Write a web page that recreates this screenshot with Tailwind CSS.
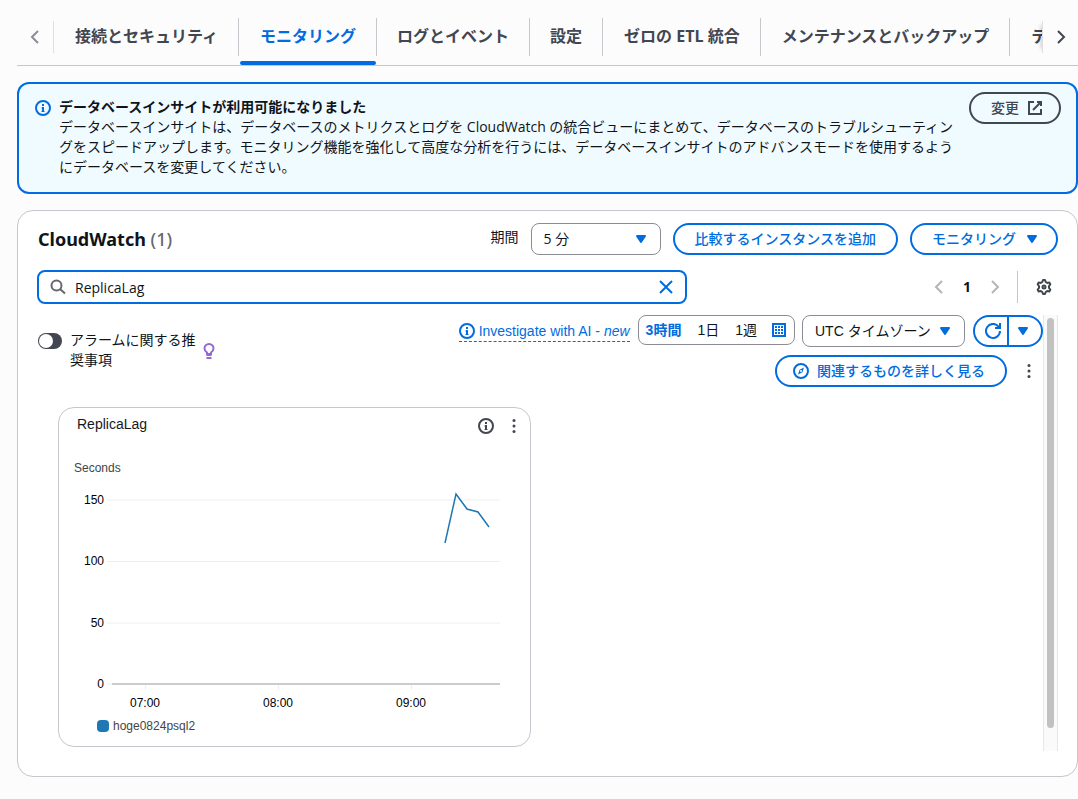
<!DOCTYPE html>
<html lang="ja">
<head>
    <meta charset="UTF-8">
    <meta name="viewport" content="width=device-width, initial-scale=1.0">
    <title>RDS - モニタリング</title>
    <script src="https://cdn.jsdelivr.net/npm/@tailwindcss/browser@4"></script>
</head>
<body class="min-h-screen bg-[#fcfcfd] pl-[17px] font-['Open_Sans','Noto_Sans_CJK_JP',sans-serif] text-sm leading-5 text-[#0f141a]">

    <!-- Tabs -->
    <nav class="flex h-[66px] items-stretch border-b border-[#c6c6cd] pt-[9px]" aria-label="タブ">
        <button class="my-3 flex w-[37px] shrink-0 items-center justify-center border-r border-[#dedee3] text-[#8c8c94]" aria-label="前へ">
            <svg class="size-4" viewBox="0 0 16 16" fill="none" stroke="currentColor" stroke-width="2"><path d="M11 2 5 8l6 6"/></svg>
        </button>
        <div class="flex min-w-0 flex-1 overflow-hidden text-base font-bold whitespace-nowrap text-[#424650]" role="tablist">
            <button class="flex shrink-0 flex-col pt-[9px]" role="tab"><span class="flex h-[38px] items-center border-r border-[#c6c6cd] pr-5 pb-[3px] pl-[21px]">接続とセキュリティ</span></button>
            <button class="flex shrink-0 flex-col justify-between pt-[9px] text-[#006ce0]" role="tab" aria-selected="true">
                <span class="flex h-[38px] items-center border-r border-[#c6c6cd] pr-5 pb-[3px] pl-[21px]">モニタリング</span>
                <span class="mx-px h-1 self-stretch rounded-full bg-[#006ce0]"></span>
            </button>
            <button class="flex shrink-0 flex-col pt-[9px]" role="tab"><span class="flex h-[38px] items-center border-r border-[#c6c6cd] px-5 pb-[3px]">ログとイベント</span></button>
            <button class="flex shrink-0 flex-col pt-[9px]" role="tab"><span class="flex h-[38px] items-center border-r border-[#c6c6cd] px-5 pb-[3px]">設定</span></button>
            <button class="flex shrink-0 flex-col pt-[9px]" role="tab"><span class="flex h-[38px] items-center border-r border-[#c6c6cd] pr-5 pb-[3px] pl-[21px]">ゼロの ETL 統合</span></button>
            <button class="flex shrink-0 flex-col pt-[9px]" role="tab"><span class="flex h-[38px] items-center border-r border-[#c6c6cd] pr-5 pb-[3px] pl-[21px]">メンテナンスとバックアップ</span></button>
            <button class="flex shrink-0 flex-col pt-[9px]" role="tab"><span class="flex h-[38px] items-center pr-5 pb-[3px] pl-[21px]">データ移行</span></button>
        </div>
        <button class="z-10 my-3 flex w-9 shrink-0 items-center justify-center border-l border-[#dedee3] bg-[#fcfcfd] text-[#424650] shadow-[-5px_0_4px_-4px_rgba(0,7,22,0.2)]" aria-label="次へ">
            <svg class="size-4" viewBox="0 0 16 16" fill="none" stroke="currentColor" stroke-width="2"><path d="m5 2 6 6-6 6"/></svg>
        </button>
    </nav>

    <!-- Info alert -->
    <section class="mt-4 flex items-start rounded-xl border-2 border-[#006ce0] bg-[#f0fbff] py-2 pr-[15px] pl-4">
        <svg class="mt-2 size-4 shrink-0 text-[#006ce0]" viewBox="0 0 16 16" fill="none" stroke="currentColor" stroke-width="2"><circle cx="8" cy="8" r="7"/><path d="M8 12V7M8 6V4"/><path d="M6.5 8H8M6.5 11.5h3" stroke-width="1"/></svg>
        <div class="ml-2 min-w-0 flex-1 pt-[5px] pb-[7px]">
            <h2 class="font-bold">データベースインサイトが利用可能になりました</h2>
            <p>データベースインサイトは、データベースのメトリクスとログを CloudWatch の統合ビューにまとめて、データベースのトラブルシューティングをスピードアップします。モニタリング機能を強化して高度な分析を行うには、データベースインサイトのアドバンスモードを使用するようにデータベースを変更してください。</p>
        </div>
        <button class="ml-3 flex h-8 shrink-0 items-center gap-2 rounded-full border-2 border-[#424650] pr-4 pl-5 font-medium text-[#424650]">
            変更
            <svg class="size-4" viewBox="0 0 16 16" fill="none" stroke="currentColor" stroke-width="2"><path d="M10 2h4v4M6 10l8-8"/><path d="M14 9v5H2V2h5"/></svg>
        </button>
    </section>

    <!-- CloudWatch panel -->
    <main class="mt-4 rounded-2xl border border-[#c6c6cd] bg-white pt-3 pr-[19px] pb-[25px] pl-5">
        <div class="flex h-8 items-center">
            <h1 class="flex-1 font-['Noto_Sans','Noto_Sans_CJK_JP',sans-serif] text-lg font-bold">CloudWatch <span class="font-medium text-[#656871]">(1)</span></h1>
            <label for="period" class="mr-3 pb-1">期間</label>
            <div class="relative mr-3">
                <select id="period" class="h-8 w-[130px] appearance-none rounded-lg border border-[#8c8c94] bg-white px-3">
                    <option>5 分</option>
                </select>
                <svg class="pointer-events-none absolute top-2 right-3 size-4 text-[#006ce0]" viewBox="0 0 16 16" fill="currentColor" stroke="currentColor" stroke-width="2" stroke-linejoin="round"><path d="M4 5h8l-4 6z"/></svg>
            </div>
            <button class="mr-3 h-8 rounded-full border-2 border-[#006ce0] px-5 font-medium text-[#006ce0]">比較するインスタンスを追加</button>
            <button class="flex h-8 items-center gap-2 rounded-full border-2 border-[#006ce0] pr-4 pl-5 font-medium text-[#006ce0]">
                モニタリング
                <svg class="size-4" viewBox="0 0 16 16" fill="currentColor" stroke="currentColor" stroke-width="2" stroke-linejoin="round"><path d="M4 5h8l-4 6z"/></svg>
            </button>
        </div>

        <div class="mt-[15px] -ml-px flex h-[34px] items-center">
            <div class="flex h-full w-[650px] items-center rounded-lg border-2 border-[#006ce0] px-[11px]">
                <svg class="size-4 shrink-0 text-[#656871]" viewBox="0 0 16 16" fill="none" stroke="currentColor" stroke-width="2"><circle cx="6.5" cy="6.5" r="5"/><path d="m10 10 5 4.5"/></svg>
                <input type="text" value="ReplicaLag" aria-label="フィルター" class="ml-[9px] min-w-0 flex-1 pt-0.5 outline-none">
                <button class="text-[#006ce0]" aria-label="クリア">
                    <svg class="size-4" viewBox="0 0 16 16" fill="none" stroke="currentColor" stroke-width="2"><path d="m2 2 12 12M14 2 2 14"/></svg>
                </button>
            </div>
            <div class="ml-auto flex items-center">
                <button class="text-[#b4b4bb]" aria-label="前のページ"><svg class="size-4" viewBox="0 0 16 16" fill="none" stroke="currentColor" stroke-width="2"><path d="M11 2 5 8l6 6"/></svg></button>
                <button class="w-10 text-center font-bold">1</button>
                <button class="text-[#b4b4bb]" aria-label="次のページ"><svg class="size-4" viewBox="0 0 16 16" fill="none" stroke="currentColor" stroke-width="2"><path d="m5 2 6 6-6 6"/></svg></button>
                <span class="mr-[18px] ml-[14px] h-8 w-px bg-[#c6c6cd]"></span>
                <button class="mr-[6px] text-[#424650]" aria-label="設定">
                    <svg class="size-4" viewBox="0 0 16 16" fill="none" stroke="currentColor" stroke-width="2" stroke-linejoin="round"><path d="M6.300 3 7 1h2l.7 2 1.500.9 2.100-.4 1 1.800L13 7v2l1.300 1.700-1 1.800-2.100-.4-1.500.9L9 15H7l-.7-2-1.500-.9-2.100.4-1-1.800L3 9V7L1.700 5.300l1-1.800 2.100.4z"/><circle cx="8" cy="8" r="1.500"/></svg>
                </button>
            </div>
        </div>

        <!-- Metrics area -->
        <div class="mt-[11px] flex h-[436px] font-['Liberation_Sans','Noto_Sans_CJK_JP',sans-serif]">
            <div class="min-w-0 flex-1">
                <div class="flex items-start">
                    <div class="mt-[15px] flex items-start">
                        <label class="flex w-[158px] items-start gap-2">
                            <input type="checkbox" role="switch" class="peer sr-only">
                            <span class="mt-[3px] flex h-4 w-6 shrink-0 items-center rounded-full bg-[#424650] px-px"><span class="size-[14px] rounded-full bg-white"></span></span>
                            <span>アラームに関する推奨事項</span>
                        </label>
                        <svg class="mt-[13px] ml-[5px] size-4 text-[#9469d6]" viewBox="0 0 16 16" fill="none" stroke="currentColor" stroke-width="2"><path d="M6 11V9.500C4.500 8.500 3.500 7.300 3.500 5.500a4.500 4.500 0 0 1 9 0c0 1.800-1 3-2.500 4V11z"/><path d="M5.500 12h5M5.500 15h5"/></svg>
                    </div>
                    <div class="flex flex-1 flex-wrap items-start justify-end gap-y-2">
                        <a href="#" class="mt-[6px] mr-2 flex items-center gap-1 border-b border-dashed border-[#006ce0] text-[#006ce0]">
                            <svg class="size-4" viewBox="0 0 16 16" fill="none" stroke="currentColor" stroke-width="2"><circle cx="8" cy="8" r="7"/><path d="M8 12V7M8 6V4"/><path d="M6.500 8H8M6.500 11.500h3" stroke-width="1"/></svg>
                            <span>Investigate with AI - <i>new</i></span>
                        </a>
                        <div class="mr-[7px] flex h-[30px] items-center rounded-lg border border-[#8c8c94] px-[7px]">
                            <button class="font-bold text-[#006ce0]">3時間</button>
                            <button class="ml-4">1日</button>
                            <button class="ml-4">1週</button>
                            <button class="ml-[14px] text-[#006ce0]" aria-label="カスタム">
                                <svg class="size-4" viewBox="0 0 16 16" fill="none" stroke="currentColor" stroke-width="2"><path d="M2 2h12v12H2z"/><path d="M4 5h2m1 0h2m1 0h2M4 8h2m1 0h2m1 0h2M4 11h2m1 0h2m1 0h2"/></svg>
                            </button>
                        </div>
                        <div class="relative mr-2">
                            <select aria-label="タイムゾーン" class="h-8 w-[163px] appearance-none rounded-lg border border-[#8c8c94] bg-white px-3">
                                <option>UTC タイムゾーン</option>
                            </select>
                            <svg class="pointer-events-none absolute top-2 right-3 size-4 text-[#006ce0]" viewBox="0 0 16 16" fill="currentColor" stroke="currentColor" stroke-width="2" stroke-linejoin="round"><path d="M4 5h8l-4 6z"/></svg>
                        </div>
                        <div class="flex h-8 w-[70px] rounded-full border-2 border-[#006ce0] text-[#006ce0]">
                            <button class="flex flex-1 items-center justify-center border-r-2 border-[#006ce0] pl-1" aria-label="更新">
                                <svg class="size-4" viewBox="0 0 16 16" fill="none" stroke="currentColor" stroke-width="2"><path d="M15 0v5h-5"/><path d="M15 8a7 7 0 1 1-1.500-4.400L15 5"/></svg>
                            </button>
                            <button class="flex w-8 items-center justify-center pr-1" aria-label="更新間隔">
                                <svg class="size-4" viewBox="0 0 16 16" fill="currentColor" stroke="currentColor" stroke-width="2" stroke-linejoin="round"><path d="M4 5h8l-4 6z"/></svg>
                            </button>
                        </div>
                        <div class="flex w-full items-center justify-end">
                            <button class="flex h-8 items-center gap-2 rounded-full border-2 border-[#006ce0] pr-5 pl-4 font-medium text-[#006ce0]">
                                <svg class="size-4" viewBox="0 0 16 16" fill="none" stroke="currentColor" stroke-width="2"><circle cx="8" cy="8" r="7"/><path d="m11 4.500-1.600 4.700-4.400 2.300 1.600-4.700z" fill="currentColor" stroke="none"/><circle cx="8" cy="8" r="1" fill="#fff" stroke="none"/></svg>
                                関連するものを詳しく見る
                            </button>
                            <button class="mr-[6px] ml-[14px] text-[#424650]" aria-label="その他">
                                <svg class="size-4" viewBox="0 0 16 16" fill="currentColor"><circle cx="8" cy="2.500" r="1.500"/><circle cx="8" cy="8" r="1.500"/><circle cx="8" cy="13.500" r="1.500"/></svg>
                            </button>
                        </div>
                    </div>
                </div>

                <!-- ReplicaLag widget -->
                <article class="mt-5 ml-5 w-[473px] rounded-2xl border border-[#c6c6cd] pb-[10px]">
                    <div class="flex h-9 items-center pr-2 pl-[18px]">
                        <h3 class="flex-1 pb-1 text-[#16191f]">ReplicaLag</h3>
                        <button class="mr-3 text-[#424650]" aria-label="情報">
                            <svg class="size-4" viewBox="0 0 16 16" fill="none" stroke="currentColor" stroke-width="2"><circle cx="8" cy="8" r="7"/><path d="M8 12V7M8 6V4"/><path d="M6.500 8H8M6.500 11.500h3" stroke-width="1"/></svg>
                        </button>
                        <button class="text-[#424650]" aria-label="その他">
                            <svg class="size-4" viewBox="0 0 16 16" fill="currentColor"><circle cx="8" cy="2.500" r="1.500"/><circle cx="8" cy="8" r="1.500"/><circle cx="8" cy="13.500" r="1.500"/></svg>
                        </button>
                    </div>
                    <svg class="block h-[272px] w-full text-xs" viewBox="0 0 471 272" role="img" aria-label="ReplicaLag (Seconds)">
                        <text x="15" y="28" fill="#444">Seconds</text>
                        <g stroke="#eee" stroke-width="1">
                            <path d="M48 56H441M48 117.500H441M48 179H441M48 240H53M86.500 241v5M219.500 241v5M352.500 241v5"/>
                        </g>
                        <path d="M53 240H441" stroke="#ccc" stroke-width="2"/>
                        <g fill="#000" text-anchor="end">
                            <text x="45" y="60">150</text>
                            <text x="45" y="121">100</text>
                            <text x="45" y="183">50</text>
                            <text x="45" y="244">0</text>
                        </g>
                        <g fill="#000" text-anchor="middle">
                            <text x="86" y="263">07:00</text>
                            <text x="219" y="263">08:00</text>
                            <text x="352" y="263">09:00</text>
                        </g>
                        <path d="m386 99 11-49 11 15 11 3 11 15" fill="none" stroke="#1f77b4" stroke-width="1.500"/>
                    </svg>
                    <div class="flex items-center gap-1 pl-[38px] text-xs leading-5 text-[#444]">
                        <span class="size-3 rounded bg-[#1f77b4]"></span>hoge0824psql2
                    </div>
                </article>
            </div>
            <!-- Scrollbar -->
            <div class="w-[15px] shrink-0 border-x border-[#e8e8e8] bg-[#fafafa] px-[3px] pt-[3px]" aria-hidden="true">
                <div class="h-[410px] rounded-full bg-[#c1c1c1]"></div>
            </div>
        </div>
    </main>
</body>
</html>
